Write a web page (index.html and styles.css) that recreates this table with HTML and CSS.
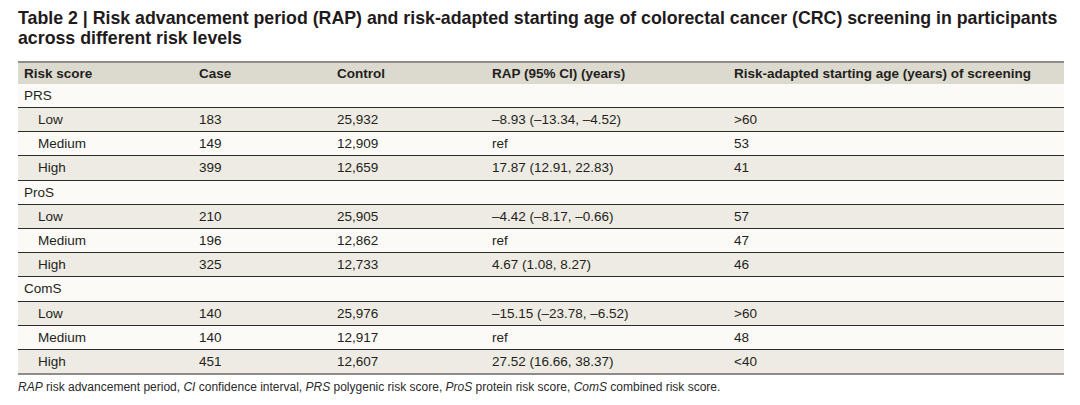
FILE: index.html
```html
<!DOCTYPE html>
<html lang="en">
<head>
<meta charset="utf-8">
<title>Table 2</title>
<link rel="stylesheet" href="styles.css">
</head>
<body>
<div class="page">
  <h1 class="title">Table 2 | Risk advancement period (RAP) and risk-adapted starting age of colorectal cancer (CRC) screening in participants across different risk levels</h1>
  <table class="data">
    <colgroup>
      <col class="c1"><col class="c2"><col class="c3"><col class="c4"><col class="c5">
    </colgroup>
    <thead>
      <tr><th>Risk score</th><th>Case</th><th>Control</th><th>RAP (95% CI) (years)</th><th>Risk-adapted starting age (years) of screening</th></tr>
    </thead>
    <tbody>
      <tr class="group"><td>PRS</td><td></td><td></td><td></td><td></td></tr>
      <tr class="odd"><td class="sub">Low</td><td>183</td><td>25,932</td><td>–8.93 (–13.34, –4.52)</td><td>&gt;60</td></tr>
      <tr class="even"><td class="sub">Medium</td><td>149</td><td>12,909</td><td>ref</td><td>53</td></tr>
      <tr class="odd"><td class="sub">High</td><td>399</td><td>12,659</td><td>17.87 (12.91, 22.83)</td><td>41</td></tr>
      <tr class="group"><td>ProS</td><td></td><td></td><td></td><td></td></tr>
      <tr class="odd"><td class="sub">Low</td><td>210</td><td>25,905</td><td>–4.42 (–8.17, –0.66)</td><td>57</td></tr>
      <tr class="even"><td class="sub">Medium</td><td>196</td><td>12,862</td><td>ref</td><td>47</td></tr>
      <tr class="odd"><td class="sub">High</td><td>325</td><td>12,733</td><td>4.67 (1.08, 8.27)</td><td>46</td></tr>
      <tr class="group"><td>ComS</td><td></td><td></td><td></td><td></td></tr>
      <tr class="odd"><td class="sub">Low</td><td>140</td><td>25,976</td><td>–15.15 (–23.78, –6.52)</td><td>&gt;60</td></tr>
      <tr class="even"><td class="sub">Medium</td><td>140</td><td>12,917</td><td>ref</td><td>48</td></tr>
      <tr class="odd"><td class="sub">High</td><td>451</td><td>12,607</td><td>27.52 (16.66, 38.37)</td><td>&lt;40</td></tr>
    </tbody>
  </table>
  <p class="note"><i>RAP</i> risk advancement period, <i>CI</i> confidence interval, <i>PRS</i> polygenic risk score, <i>ProS</i> protein risk score, <i>ComS</i> combined risk score.</p>
</div>
</body>
</html>
```
FILE: styles.css
```css
html, body {
  margin: 0;
  padding: 0;
  background: #ffffff;
}
.page {
  padding: 8px 8px 0 18px;
  font-family: "Liberation Sans", Arial, sans-serif;
  color: #231f20;
}
.title {
  margin: 0;
  font-size: 17.75px;
  line-height: 20px;
  font-weight: bold;
  color: #1f1b1c;
  width: 1054px;
}
.data {
  margin-top: 13px;
  width: 1046px;
  border-collapse: collapse;
  font-size: 13.5px;
  table-layout: fixed;
}
.c1 { width: 175px; }
.c2 { width: 138px; }
.c3 { width: 155px; }
.c4 { width: 242px; }
.c5 { width: 336px; }
.data th {
  background: #dcd9ce;
  text-align: left;
  font-weight: bold;
  font-size: 13.5px;
  height: 21px;
  padding: 0 6px;
  border-top: 2px solid #8e8c88;
}
.data td {
  height: 23.2px;
  padding: 0 6px;
  border-top: 1.5px solid #2b2b2b;
}
.data tbody tr:first-child td {
  border-top: none;
  height: 23px;
}
.data tbody tr:last-child td {
  border-bottom: 2px solid #8e8c88;
}
.group td { background: #fbfaf6; }
.odd td { background: #edebe3; }
.even td { background: #fbfaf6; }
.data td.sub { padding-left: 20px; }
.note {
  margin: 5px 0 0;
  font-size: 12px;
  color: #2a2a2a;
}
```
